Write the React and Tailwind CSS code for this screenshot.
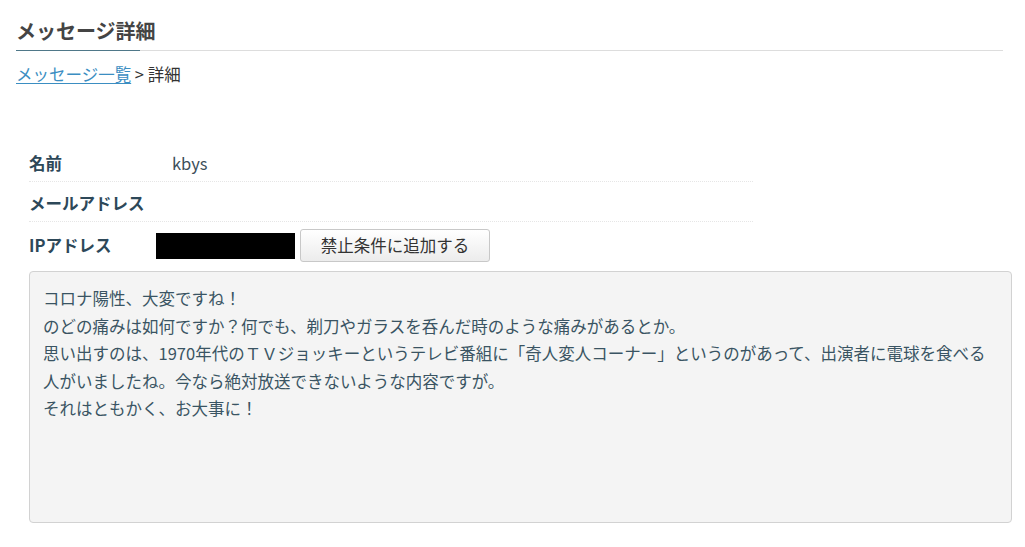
import React from "react";

// Message detail page — admin view of a single message
const rows = [
  { label: "名前", value: "kbys" },
  { label: "メールアドレス", value: "" },
];

const body = [
  "コロナ陽性、大変ですね！",
  "のどの痛みは如何ですか？何でも、剃刀やガラスを呑んだ時のような痛みがあるとか。",
  "思い出すのは、1970年代のＴＶジョッキーというテレビ番組に「奇人変人コーナー」というのがあって、出演者に電球を食べる",
  "人がいましたね。今なら絶対放送できないような内容ですが。",
  "それはともかく、お大事に！",
];

function App() {
  return (
    <div className="min-h-screen bg-white font-['Noto_Sans_CJK_JP',sans-serif] text-[16.5px] text-[#333]">
      <div className="pl-[16px] pt-[16px]">
        {/* ── Title ── */}
        <div className="w-[987px]">
          <h1 className="text-[20px] font-bold leading-[30px] text-[#444] pb-[4px]">メッセージ詳細</h1>
          <div className="flex h-px">
            <div className="w-[124px] bg-[#4f7889]"></div>
            <div className="flex-1 bg-[#dddddd]"></div>
          </div>
        </div>

        {/* ── Breadcrumb ── */}
        <div className="mt-[10px] leading-[27px]">
          <a href="#" className="text-[#3b8ec2] underline underline-offset-2">メッセージ一覧</a>
          <span> &gt; 詳細</span>
        </div>
      </div>

      {/* ── Detail table ── */}
      <div className="ml-[29px] mt-[54px] w-[724px] text-[#34505f]">
        {rows.map((r) => (
          <div key={r.label} className="grid grid-cols-[127px_1fr] pt-2 pb-1 leading-[27px] border-b border-dotted border-[#e6e6e6]">
            <div className="font-bold text-[#2d4859]">{r.label}</div>
            <div className="pl-4 text-[#3d4f5a]">{r.value}</div>
          </div>
        ))}
        <div className="grid grid-cols-[127px_1fr] items-center pt-[7px]">
          <div className="font-bold text-[#2d4859] leading-[27px]">IPアドレス</div>
          <div className="flex items-center gap-[5px]">
            <div className="w-[139px] h-[26px] bg-black"></div>
            <button
              type="button"
              className="w-[190px] h-[33px] rounded-[3px] border border-[#c8c8c8] bg-gradient-to-b from-white to-[#ececec] text-[#333] text-[16.5px] leading-none"
            >
              禁止条件に追加する
            </button>
          </div>
        </div>
      </div>

      {/* ── Message body ── */}
      <div className="ml-[29px] mt-[9px] w-[983px] h-[252px] rounded-[4px] border border-[#d2d2d2] bg-[#f4f4f4] px-[13px] pt-[13px] text-[#3a5463] leading-[27.5px]">
        {body.map((line, i) => (
          <div key={i} className="whitespace-nowrap">{line}</div>
        ))}
      </div>
    </div>
  );
}

export default App;
